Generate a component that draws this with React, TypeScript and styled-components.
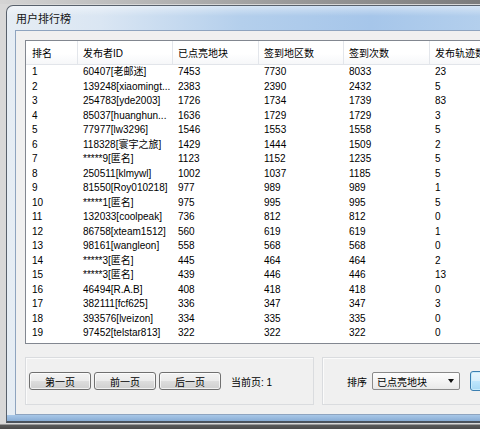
import styled, { createGlobalStyle } from 'styled-components';

const COLUMNS = ['排名', '发布者ID', '已点亮地块', '签到地区数', '签到次数', '发布轨迹数'];
const COL_WIDTHS = '51px 95px 86px 85px 86px 120px';

const ROWS: [string, string, number, number, number, number][] = [
  ['1', '60407[老邮迷]', 7453, 7730, 8033, 23],
  ['2', '139248[xiaomingt...', 2383, 2390, 2432, 5],
  ['3', '254783[yde2003]', 1726, 1734, 1739, 83],
  ['4', '85037[huanghun...', 1636, 1729, 1729, 3],
  ['5', '77977[lw3296]', 1546, 1553, 1558, 5],
  ['6', '118328[寰宇之旅]', 1429, 1444, 1509, 2],
  ['7', '*****9[匿名]', 1123, 1152, 1235, 5],
  ['8', '250511[klmywl]', 1002, 1037, 1185, 5],
  ['9', '81550[Roy010218]', 977, 989, 989, 1],
  ['10', '*****1[匿名]', 975, 995, 995, 5],
  ['11', '132033[coolpeak]', 736, 812, 812, 0],
  ['12', '86758[xteam1512]', 560, 619, 619, 1],
  ['13', '98161[wangleon]', 558, 568, 568, 0],
  ['14', '*****3[匿名]', 445, 464, 464, 2],
  ['15', '*****3[匿名]', 439, 446, 446, 13],
  ['16', '46494[R.A.B]', 408, 418, 418, 0],
  ['17', '382111[fcf625]', 336, 347, 347, 3],
  ['18', '393576[lveizon]', 334, 335, 335, 0],
  ['19', '97452[telstar813]', 322, 322, 322, 0],
];

const PAGE_BUTTONS = ['第一页', '前一页', '后一页'];

const GlobalStyle = createGlobalStyle`
  html, body {
    margin: 0;
    height: 429px;
    overflow: hidden;
  }
  body {
    background:
      linear-gradient(to right, #d4d4d4 0%, #9a9a9a 60%, #7c7c7c 100%) top / 100% 4px no-repeat,
      linear-gradient(to bottom, #d8d8d8 0, #d8d8d8 424px, #5a5a5a 425px, #4a4a4a 100%);
    font-family: 'Liberation Sans', 'Noto Sans CJK SC', sans-serif;
    font-size: 10px;
    color: #000;
  }
`;

const Desktop = styled.div`
  padding: 5px 0 0 6px;
`;

const Window = styled.div`
  width: 520px;
  border: 1px solid #58616c;
  border-right: none;
  border-bottom: 2px solid #4a525c;
  border-radius: 7px 0 0 0;
  background:
    linear-gradient(to bottom, rgba(255, 255, 255, 0.45), rgba(255, 255, 255, 0) 10px),
    linear-gradient(to right, #e6edf4 0%, #dae6f3 18%, #b4cfec 45%, #a6c6ea 70%, #b9d3ee 100%);
`;

const TitleBar = styled.div`
  height: 24px;
  display: flex;
  align-items: center;
  padding-left: 9px;
  font-size: 11px;
  color: #141414;
`;

const Client = styled.div`
  margin-left: 8px;
  height: 374px;
  padding: 9px 0 0 9px;
  background: #f0f0f0;
  border: 1px solid #8ea4bf;
  border-right: none;
`;

const FrameBottom = styled.div`
  height: 6px;
  background: linear-gradient(to bottom, #a8c7e8, #88acd4);
`;

const ListView = styled.div`
  width: 600px;
  height: 302px;
  background: #fff;
  border: 1px solid #828790;
  border-right: none;
  overflow: hidden;
`;

const HeaderRow = styled.div`
  display: grid;
  grid-template-columns: ${COL_WIDTHS};
  height: 23px;
  border-bottom: 1px solid #e2e5ea;
  background: linear-gradient(to bottom, #ffffff 0%, #ffffff 55%, #f6f7f9 100%);
`;

const HeaderCell = styled.div`
  display: flex;
  align-items: center;
  padding-left: 5px;
  border-left: 1px solid #e3e6eb;
  white-space: nowrap;

  &:first-child {
    border-left: none;
    padding-left: 6px;
  }
`;

const Row = styled.div`
  display: grid;
  grid-template-columns: ${COL_WIDTHS};
  height: 14.5px;
  line-height: 14.5px;
`;

const Cell = styled.div`
  padding-left: 6px;
  white-space: nowrap;
  overflow: hidden;
`;

const Footer = styled.div`
  display: flex;
  gap: 8px;
  margin-top: 13px;
`;

const Panel = styled.div<{ $width: number; $pad: number }>`
  width: ${({ $width }) => $width}px;
  height: 46px;
  display: flex;
  align-items: center;
  padding-left: ${({ $pad }) => $pad}px;
  border: 1px solid #dadcdf;
  box-shadow: inset 1px 1px 0 #fbfbfb;
  flex-shrink: 0;
`;

const PageButton = styled.button`
  width: 62px;
  height: 18px;
  margin-right: 3px;
  padding: 0;
  font: inherit;
  color: #000;
  border: 1px solid #707070;
  border-radius: 3px;
  background: linear-gradient(to bottom, #f3f3f3 0%, #ebebeb 48%, #dddddd 52%, #cfcfcf 100%);
  box-shadow: inset 0 0 0 1px rgba(255, 255, 255, 0.7);
`;

const PageInfo = styled.span`
  margin-left: 7px;
`;

const Label = styled.span`
  margin-right: 5px;
`;

const Select = styled.div`
  width: 82px;
  height: 16px;
  display: flex;
  align-items: center;
  justify-content: space-between;
  padding: 0 0 0 4px;
  border: 1px solid #8a8a8a;
  border-radius: 2px;
  background: linear-gradient(to bottom, #fdfdfd 0%, #f4f4f4 50%, #e9e9e9 100%);
`;

const Arrow = styled.span`
  width: 0;
  height: 0;
  margin-right: 5px;
  border-left: 3.5px solid transparent;
  border-right: 3.5px solid transparent;
  border-top: 4px solid #111;
`;

const DefaultButton = styled.button`
  width: 44px;
  height: 20px;
  margin-left: 10px;
  padding: 0;
  font: inherit;
  color: #000;
  border: 1px solid #3c7fb1;
  border-radius: 3px;
  background: linear-gradient(to bottom, #eaf6fd 0%, #d9f0fc 48%, #bee6fd 52%, #a7d9f5 100%);
  box-shadow: inset 0 0 0 1px #c8ecfc;
`;

export default function App() {
  return (
    <>
      <GlobalStyle />
      <Desktop>
        <Window>
          <TitleBar>用户排行榜</TitleBar>
          <Client>
            <ListView>
              <HeaderRow>
                {COLUMNS.map((c) => (
                  <HeaderCell key={c}>{c}</HeaderCell>
                ))}
              </HeaderRow>
              {ROWS.map((r, i) => (
                <Row key={i}>
                  {r.map((v, j) => (
                    <Cell key={j}>{v}</Cell>
                  ))}
                </Row>
              ))}
            </ListView>
            <Footer>
              <Panel $width={284} $pad={3}>
                {PAGE_BUTTONS.map((b) => (
                  <PageButton key={b} type="button">
                    {b}
                  </PageButton>
                ))}
                <PageInfo>当前页: 1</PageInfo>
              </Panel>
              <Panel $width={300} $pad={24}>
                <Label>排序</Label>
                <Select>
                  <span>已点亮地块</span>
                  <Arrow />
                </Select>
                <DefaultButton type="button">查询</DefaultButton>
              </Panel>
            </Footer>
          </Client>
          <FrameBottom />
        </Window>
      </Desktop>
    </>
  );
}
